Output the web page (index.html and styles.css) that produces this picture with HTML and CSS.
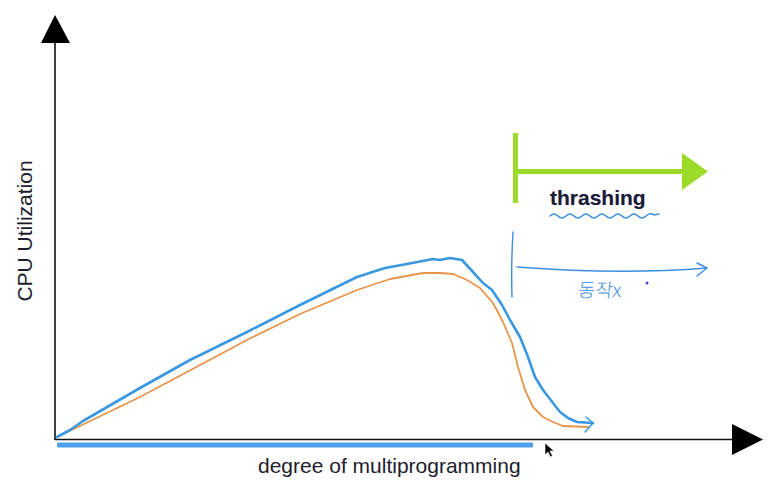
FILE: index.html
```html
<!DOCTYPE html>
<html lang="ko">
<head>
<meta charset="utf-8">
<title>Thrashing</title>
<link rel="stylesheet" href="styles.css">
</head>
<body>
<div class="stage">
  <svg class="chart" width="771" height="488" viewBox="0 0 771 488" xmlns="http://www.w3.org/2000/svg">
    <!-- axes -->
    <line x1="55" y1="40" x2="55" y2="440" stroke="#111" stroke-width="1.6"/>
    <polygon points="55,15 70,43 41,43" fill="#000"/>
    <line x1="55" y1="439.5" x2="736" y2="439.5" stroke="#111" stroke-width="1.6"/>
    <polygon points="732,424 763,439.5 732,455" fill="#000"/>
    <!-- blue bar -->
    <rect x="57" y="442.5" width="476" height="5" rx="1" fill="#4e9fe9"/>
    <!-- orange curve -->
    <polyline points="57,437 140,397 247,340 300,314 357,290 390,279 423,273 440,273 453,274 467,280 480,288 493,303 503,322 512,343 518,367 525,390 533,407 543,417 553,422 563,426 588,427" fill="none" stroke="#e8954c" stroke-width="1.8" stroke-linejoin="round" stroke-linecap="round"/>
    <!-- blue curve -->
    <polyline points="57,437 70,430 83,421 140,388 190,360 247,332 300,305 357,277 385,268 407,264 433,259 440,260 450,258 462,260 473,272 483,283 492,290 502,305 510,320 520,337 528,357 535,377 543,390 553,403 560,412 568,418 577,422 593,423" fill="none" stroke="#3a98e2" stroke-width="2.6" stroke-linejoin="round" stroke-linecap="round"/>
    <path d="M586,417 L593,423 L585,432" fill="none" stroke="#3a98e2" stroke-width="1.6" stroke-linecap="round" stroke-linejoin="round"/>
    <!-- green thrashing marker -->
    <rect x="513" y="133" width="5" height="70" fill="#9ddb2a"/>
    <rect x="516" y="169" width="168" height="5" fill="#9ddb2a"/>
    <polygon points="682,153 708,171.5 682,190" fill="#9ddb2a"/>
    <!-- wavy underline -->
    <path d="M550,216 Q554,212 558,216 T566,216 T574,216 T582,216 T590,216 T598,216 T606,216 T614,216 T622,216 T630,216 T638,216 T646,216 T654,215 L659,214" fill="none" stroke="#3a8fe0" stroke-width="1.4" stroke-linecap="round"/>
    <!-- hand-drawn marker -->
    <path d="M513,232 Q511,265 512,297" fill="none" stroke="#3d8fe0" stroke-width="1.4" stroke-linecap="round"/>
    <path d="M517,267 Q620,275 707,268" fill="none" stroke="#3d8fe0" stroke-width="1.4" stroke-linecap="round"/>
    <path d="M697,263 L707,268 L697,276" fill="none" stroke="#3d8fe0" stroke-width="1.4" stroke-linecap="round" stroke-linejoin="round"/>
    <circle cx="647" cy="283" r="1.5" fill="#5b3fd4"/>
    <!-- mouse cursor -->
    <path d="M545,443 L545,455 L548,452 L550.5,457 L552.5,456 L550,451 L554,451 Z" fill="#000" stroke="#fff" stroke-width="0.6"/>
  </svg>
  <span class="label label-y">CPU Utilization</span>
  <span class="label label-x">degree of multiprogramming</span>
  <span class="label label-thrash">thrashing</span>
  <span class="label label-note">동작x</span>
</div>
</body>
</html>
```
FILE: styles.css
```css
html, body {
  margin: 0;
  padding: 0;
  background: #ffffff;
}

.stage {
  position: relative;
  width: 771px;
  height: 488px;
  overflow: hidden;
  background: #ffffff;
}

.chart {
  display: block;
}

.label {
  position: absolute;
  font-family: "Liberation Sans", Arial, sans-serif;
  font-size: 21px;
  line-height: 24px;
  color: #1d1d2c;
  white-space: nowrap;
}

.label-y {
  left: -47px;
  top: 219px;
  width: 144px;
  text-align: center;
  transform: rotate(-90deg);
}

.label-x {
  left: 258px;
  top: 454px;
}

.label-thrash {
  left: 550px;
  top: 186px;
  font-weight: bold;
  color: #1b1b36;
  text-shadow: 0 0 1px rgba(60, 60, 160, 0.35);
}

.label-note {
  left: 578px;
  top: 278px;
  font-family: "Noto Sans CJK KR", "Noto Sans", sans-serif;
  font-size: 19px;
  font-weight: 300;
  line-height: 22px;
  color: #3d8fe0;
  transform: skewX(-6deg);
}
```
